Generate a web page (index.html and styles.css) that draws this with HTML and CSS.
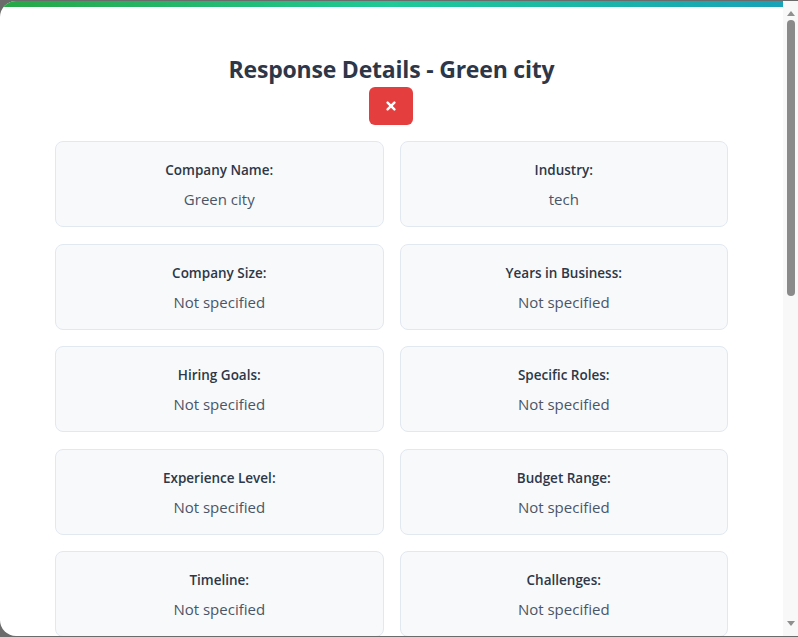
FILE: index.html
```html
<!DOCTYPE html>
<html lang="en">
<head>
<meta charset="utf-8">
<title>Response Details - Green city</title>
<link rel="stylesheet" href="styles.css">
</head>
<body>
<div class="modal">
  <div class="modal-main">
    <div class="accent"></div>
    <div class="modal-body">
      <header class="modal-header">
        <h2 class="title">Response Details - Green city</h2>
        <button class="close-btn" aria-label="Close">
          <svg width="10" height="10" viewBox="0 0 10 10"><path d="M1.6 1.6L8.4 8.4M8.4 1.6L1.6 8.4" stroke="#fff" stroke-width="2.4" stroke-linecap="round"/></svg>
        </button>
      </header>
      <div class="grid">
        <div class="card"><div class="label">Company Name:</div><div class="value">Green city</div></div>
        <div class="card"><div class="label">Industry:</div><div class="value">tech</div></div>
        <div class="card"><div class="label">Company Size:</div><div class="value">Not specified</div></div>
        <div class="card"><div class="label">Years in Business:</div><div class="value">Not specified</div></div>
        <div class="card"><div class="label">Hiring Goals:</div><div class="value">Not specified</div></div>
        <div class="card"><div class="label">Specific Roles:</div><div class="value">Not specified</div></div>
        <div class="card"><div class="label">Experience Level:</div><div class="value">Not specified</div></div>
        <div class="card"><div class="label">Budget Range:</div><div class="value">Not specified</div></div>
        <div class="card"><div class="label">Timeline:</div><div class="value">Not specified</div></div>
        <div class="card"><div class="label">Challenges:</div><div class="value">Not specified</div></div>
      </div>
    </div>
  </div>
  <div class="scrollbar" aria-hidden="true">
    <div class="sb-arrow sb-up">
      <svg width="8" height="5" viewBox="0 0 8 5"><path d="M4 0L8 5H0Z" fill="#8f8f8f"/></svg>
    </div>
    <div class="sb-track">
      <div class="sb-thumb"></div>
    </div>
    <div class="sb-arrow sb-down">
      <svg width="8" height="5" viewBox="0 0 8 5"><path d="M0 0H8L4 5Z" fill="#8f8f8f"/></svg>
    </div>
  </div>
</div>
</body>
</html>
```
FILE: styles.css
```css
html, body {
  margin: 0;
  height: 100%;
}

body {
  background: #6b6b6b;
  overflow: hidden;
  font-family: "Open Sans", "Noto Sans", sans-serif;
}

.modal {
  margin-top: 1px;
  height: 635px;
  background: #ffffff;
  border-radius: 16px 0 0 16px;
  overflow: hidden;
  display: flex;
}

.modal-main {
  flex: 1;
  min-width: 0;
}

.accent {
  height: 6px;
  background: linear-gradient(90deg, #28a745, #20c997, #17a2b8);
}

.modal-body {
  padding: 47px 55px 0;
}

.modal-header {
  display: flex;
  flex-direction: column;
  align-items: center;
}

.title {
  margin: 0;
  font-size: 23px;
  line-height: 28px;
  letter-spacing: -0.2px;
  font-weight: 700;
  color: #2d3748;
  padding-top: 1px;
}

.close-btn {
  margin-top: 4px;
  margin-right: 1px;
  width: 44px;
  height: 38px;
  border: none;
  border-radius: 6px;
  background: #e53e3e;
  display: flex;
  align-items: center;
  justify-content: center;
  padding: 0;
}

.close-btn svg {
  display: block;
}

.grid {
  margin-top: 16px;
  display: grid;
  grid-template-columns: 1fr 1fr;
  column-gap: 16px;
  row-gap: 16.5px;
}

.card {
  background: #f8f9fa;
  border: 1px solid #e2e8f0;
  border-radius: 8px;
  padding: 18px 16px 12px;
  text-align: center;
  height: 86px;
  box-sizing: border-box;
}

.label {
  font-size: 13.5px;
  line-height: 21px;
  font-weight: 600;
  color: #2d3748;
  margin-bottom: 6px;
}

.value {
  font-size: 15px;
  line-height: 24px;
  color: #4a5568;
}

.scrollbar {
  flex: 0 0 15px;
  background: #f8f8f8;
  display: flex;
  flex-direction: column;
}

.sb-arrow {
  height: 17px;
  display: flex;
  justify-content: center;
  flex: 0 0 17px;
}

.sb-arrow svg {
  display: block;
  margin-left: 1px;
}

.sb-up {
  align-items: flex-start;
  padding-top: 10px;
  box-sizing: border-box;
}

.sb-down {
  align-items: flex-start;
  padding-top: 2px;
  box-sizing: border-box;
}

.sb-track {
  flex: 1;
  display: flex;
  justify-content: center;
}

.sb-thumb {
  width: 8px;
  height: 276px;
  margin-top: 2px;
  margin-left: 1px;
  border-radius: 4px;
  background: #8a8a8a;
}
```
